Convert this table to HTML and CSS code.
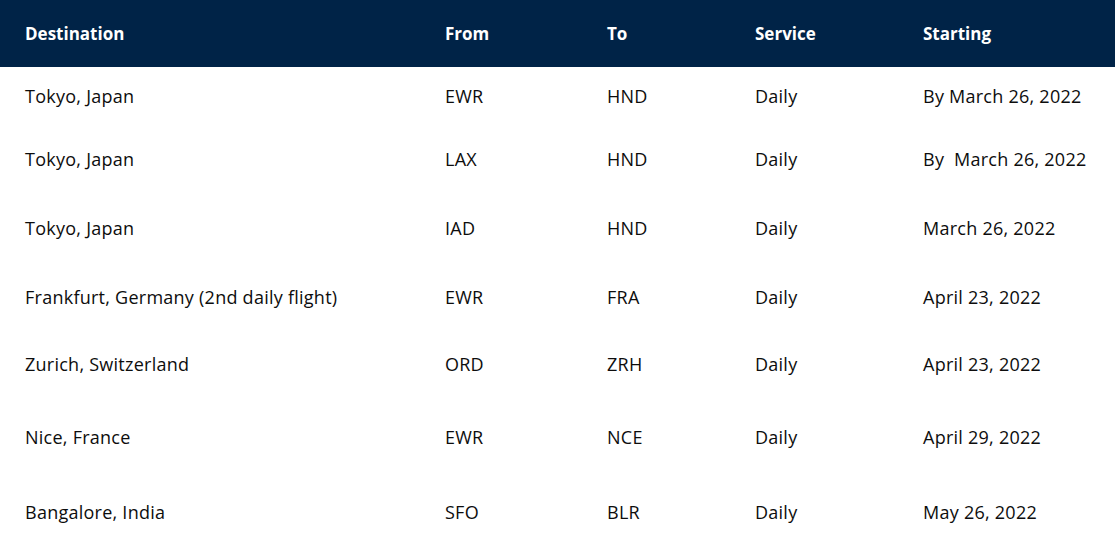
FILE: index.html
```html
<!DOCTYPE html>
<html>
<head>
<meta charset="utf-8">
<link rel="stylesheet" href="styles.css">
</head>
<body>
<table class="routes">
  <thead>
    <tr class="head">
      <th class="c1">Destination</th>
      <th class="c2">From</th>
      <th class="c3">To</th>
      <th class="c4">Service</th>
      <th class="c5">Starting</th>
    </tr>
  </thead>
  <tbody>
    <tr class="r1"><td>Tokyo, Japan</td><td>EWR</td><td>HND</td><td>Daily</td><td>By March 26, 2022</td></tr>
    <tr class="r2"><td>Tokyo, Japan</td><td>LAX</td><td>HND</td><td>Daily</td><td>By&nbsp; March 26, 2022</td></tr>
    <tr class="r3"><td>Tokyo, Japan</td><td>IAD</td><td>HND</td><td>Daily</td><td>March 26, 2022</td></tr>
    <tr class="r4"><td>Frankfurt, Germany (2nd daily flight)</td><td>EWR</td><td>FRA</td><td>Daily</td><td>April 23, 2022</td></tr>
    <tr class="r5"><td>Zurich, Switzerland</td><td>ORD</td><td>ZRH</td><td>Daily</td><td>April 23, 2022</td></tr>
    <tr class="r6"><td>Nice, France</td><td>EWR</td><td>NCE</td><td>Daily</td><td>April 29, 2022</td></tr>
    <tr class="r7"><td>Bangalore, India</td><td>SFO</td><td>BLR</td><td>Daily</td><td>May 26, 2022</td></tr>
  </tbody>
</table>
</body>
</html>
```
FILE: styles.css
```css
html, body {
  margin: 0;
  padding: 0;
  background: #ffffff;
}
body {
  font-family: "Open Sans", "Liberation Sans", sans-serif;
  color: #111111;
}
.routes {
  width: 1115px;
  border-collapse: collapse;
  table-layout: fixed;
}
.routes th,
.routes td {
  padding: 0 0 0 25px;
  text-align: left;
  white-space: nowrap;
  vertical-align: middle;
}
.routes th {
  background: #002347;
  color: #ffffff;
  font-size: 17px;
  font-weight: 700;
  height: 67px;
}
.routes td {
  font-size: 18px;
  font-weight: 500;
  letter-spacing: 0.25px;
  color: #0d0d0d;
}
.routes th.c1 { width: 395px; }
.routes th.c2 { width: 137px; }
.routes th.c3 { width: 123px; }
.routes th.c4 { width: 143px; }
.r1 td { height: 57px; }
.r2 td { height: 70px; }
.r3 td { height: 68px; }
.r4 td { height: 70px; }
.r5 td { height: 64px; }
.r6 td { height: 82px; }
.r7 td { height: 68px; }
```
